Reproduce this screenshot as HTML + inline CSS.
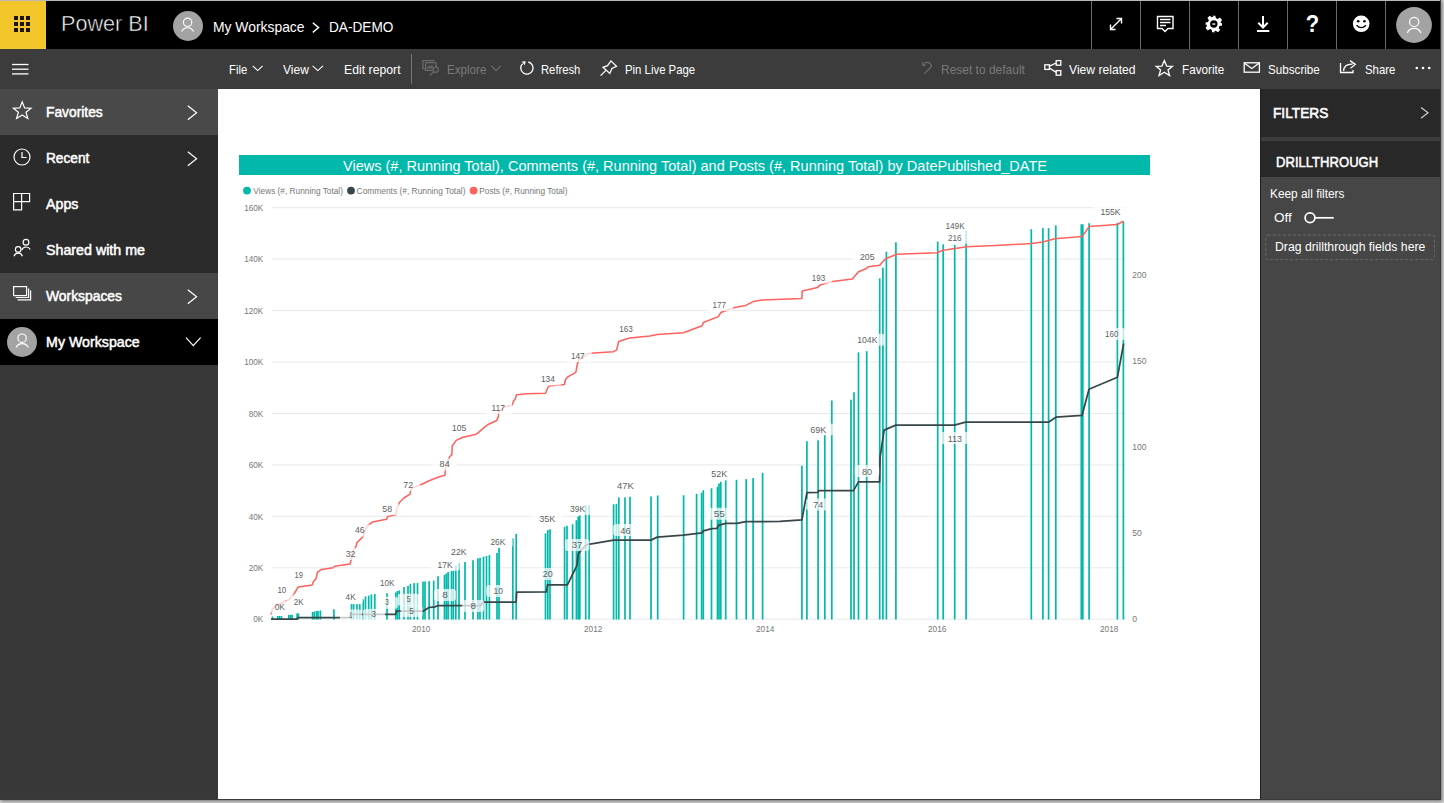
<!DOCTYPE html>
<html><head><meta charset="utf-8">
<style>
*{margin:0;padding:0;box-sizing:border-box}
html,body{width:1444px;height:803px;overflow:hidden;background:#cfcfcf;font-family:"Liberation Sans",sans-serif}
#win{position:absolute;left:0;top:0;width:1441px;height:800px;overflow:hidden;background:#383838;border-right:1px solid #3a3a3a;border-bottom:1px solid #3a3a3a;box-shadow:1px 1px 3px rgba(0,0,0,.45)}
.abs{position:absolute}
.t{position:absolute;white-space:nowrap;color:#fff}
</style></head><body><div id="win">
<div class="abs" style="left:0;top:0;width:1441px;height:49px;background:#000;border-top:1px solid #b9b9b9"></div>
<div class="abs" style="left:0;top:1px;width:46px;height:48px;background:#F3C72B"></div>
<div class="abs" style="left:0;top:49px;width:1441px;height:40px;background:#3c3c3c"></div>
<div class="abs" style="left:0;top:89px;width:218px;height:711px;background:#383838"></div>
<div class="abs" style="left:0;top:89px;width:218px;height:46px;background:#494949"></div>
<div class="abs" style="left:0;top:135px;width:218px;height:138px;background:#2b2b2b"></div>
<div class="abs" style="left:0;top:273px;width:218px;height:46px;background:#474747"></div>
<div class="abs" style="left:0;top:319px;width:218px;height:46px;background:#000"></div>
<div class="abs" style="left:218px;top:89px;width:1042px;height:711px;background:#fff;overflow:hidden"><svg width="1042" height="711" viewBox="218 89 1042 711" style="position:absolute;left:0;top:0" font-family="Liberation Sans">
<rect x="239" y="155" width="911" height="20" fill="#01B8AA"/>
<text x="343" y="170.6" font-size="14.4" fill="#fff" textLength="704" lengthAdjust="spacingAndGlyphs">Views (#, Running Total), Comments (#, Running Total) and Posts (#, Running Total) by DatePublished_DATE</text>
<circle cx="247" cy="190.6" r="3.9" fill="#01B8AA"/><circle cx="351" cy="190.6" r="3.9" fill="#374649"/><circle cx="473.6" cy="190.6" r="3.9" fill="#FD625E"/>
<text x="253.3" y="194.1" font-size="9" fill="#777" textLength="89.7" lengthAdjust="spacingAndGlyphs">Views (#, Running Total)</text>
<text x="356.6" y="194.1" font-size="9" fill="#777" textLength="108.9" lengthAdjust="spacingAndGlyphs">Comments (#, Running Total)</text>
<text x="479.3" y="194.1" font-size="9" fill="#777" textLength="88.1" lengthAdjust="spacingAndGlyphs">Posts (#, Running Total)</text>
<line x1="272" y1="207.7" x2="1125.5" y2="207.7" stroke="#e9e9e9" stroke-width="1"/>
<text x="244.2" y="210.9" font-size="9" fill="#777" textLength="19.1" lengthAdjust="spacingAndGlyphs">160K</text>
<line x1="272" y1="259.1" x2="1125.5" y2="259.1" stroke="#e9e9e9" stroke-width="1"/>
<text x="244.2" y="262.3" font-size="9" fill="#777" textLength="19.1" lengthAdjust="spacingAndGlyphs">140K</text>
<line x1="272" y1="310.6" x2="1125.5" y2="310.6" stroke="#e9e9e9" stroke-width="1"/>
<text x="244.2" y="313.8" font-size="9" fill="#777" textLength="19.1" lengthAdjust="spacingAndGlyphs">120K</text>
<line x1="272" y1="362.0" x2="1125.5" y2="362.0" stroke="#e9e9e9" stroke-width="1"/>
<text x="244.2" y="365.2" font-size="9" fill="#777" textLength="19.1" lengthAdjust="spacingAndGlyphs">100K</text>
<line x1="272" y1="413.5" x2="1125.5" y2="413.5" stroke="#e9e9e9" stroke-width="1"/>
<text x="248.7" y="416.7" font-size="9" fill="#777" textLength="14.6" lengthAdjust="spacingAndGlyphs">80K</text>
<line x1="272" y1="464.9" x2="1125.5" y2="464.9" stroke="#e9e9e9" stroke-width="1"/>
<text x="248.7" y="468.1" font-size="9" fill="#777" textLength="14.6" lengthAdjust="spacingAndGlyphs">60K</text>
<line x1="272" y1="516.3" x2="1125.5" y2="516.3" stroke="#e9e9e9" stroke-width="1"/>
<text x="248.7" y="519.5" font-size="9" fill="#777" textLength="14.6" lengthAdjust="spacingAndGlyphs">40K</text>
<line x1="272" y1="567.8" x2="1125.5" y2="567.8" stroke="#e9e9e9" stroke-width="1"/>
<text x="248.7" y="571.0" font-size="9" fill="#777" textLength="14.6" lengthAdjust="spacingAndGlyphs">20K</text>
<line x1="272" y1="619.2" x2="1125.5" y2="619.2" stroke="#e9e9e9" stroke-width="1"/>
<text x="253.2" y="622.4" font-size="9" fill="#777" textLength="10.1" lengthAdjust="spacingAndGlyphs">0K</text>
<text x="1132.3" y="622.3" font-size="9" fill="#777" textLength="4.8" lengthAdjust="spacingAndGlyphs">0</text>
<text x="1132.3" y="536.3" font-size="9" fill="#777" textLength="9.5" lengthAdjust="spacingAndGlyphs">50</text>
<text x="1132.3" y="450.4" font-size="9" fill="#777" textLength="14.2" lengthAdjust="spacingAndGlyphs">100</text>
<text x="1132.3" y="364.4" font-size="9" fill="#777" textLength="14.2" lengthAdjust="spacingAndGlyphs">150</text>
<text x="1132.3" y="278.4" font-size="9" fill="#777" textLength="14.2" lengthAdjust="spacingAndGlyphs">200</text>
<text x="412.0" y="631.7" font-size="9" fill="#777" textLength="18.4" lengthAdjust="spacingAndGlyphs">2010</text>
<text x="584.0" y="631.7" font-size="9" fill="#777" textLength="18.4" lengthAdjust="spacingAndGlyphs">2012</text>
<text x="756.0" y="631.7" font-size="9" fill="#777" textLength="18.4" lengthAdjust="spacingAndGlyphs">2014</text>
<text x="928.0" y="631.7" font-size="9" fill="#777" textLength="18.4" lengthAdjust="spacingAndGlyphs">2016</text>
<text x="1100.0" y="631.7" font-size="9" fill="#777" textLength="18.4" lengthAdjust="spacingAndGlyphs">2018</text>
<rect x="271.65" y="616.5" width="1.7" height="3.0" fill="#01B8AA"/>
<rect x="276.85" y="616.0" width="1.7" height="3.5" fill="#01B8AA"/>
<rect x="278.55" y="616.0" width="1.7" height="3.5" fill="#01B8AA"/>
<rect x="280.55" y="616.0" width="1.7" height="3.5" fill="#01B8AA"/>
<rect x="287.95" y="614.8" width="1.7" height="4.7" fill="#01B8AA"/>
<rect x="289.65" y="614.8" width="1.7" height="4.7" fill="#01B8AA"/>
<rect x="291.25" y="614.8" width="1.7" height="4.7" fill="#01B8AA"/>
<rect x="296.25" y="613.4" width="1.7" height="6.1" fill="#01B8AA"/>
<rect x="297.55" y="613.4" width="1.7" height="6.1" fill="#01B8AA"/>
<rect x="311.75" y="612.0" width="1.7" height="7.5" fill="#01B8AA"/>
<rect x="313.45" y="611.5" width="1.7" height="8.0" fill="#01B8AA"/>
<rect x="315.65" y="611.0" width="1.7" height="8.5" fill="#01B8AA"/>
<rect x="317.15" y="611.0" width="1.7" height="8.5" fill="#01B8AA"/>
<rect x="319.55" y="610.5" width="1.7" height="9.0" fill="#01B8AA"/>
<rect x="333.05" y="609.3" width="1.7" height="10.2" fill="#01B8AA"/>
<rect x="350.65" y="604.1" width="1.7" height="15.4" fill="#01B8AA"/>
<rect x="352.75" y="604.1" width="1.7" height="15.4" fill="#01B8AA"/>
<rect x="356.15" y="604.1" width="1.7" height="15.4" fill="#01B8AA"/>
<rect x="358.95" y="604.1" width="1.7" height="15.4" fill="#01B8AA"/>
<rect x="362.45" y="599.3" width="1.7" height="20.2" fill="#01B8AA"/>
<rect x="364.65" y="596.4" width="1.7" height="23.1" fill="#01B8AA"/>
<rect x="367.85" y="595.6" width="1.7" height="23.9" fill="#01B8AA"/>
<rect x="370.55" y="594.4" width="1.7" height="25.1" fill="#01B8AA"/>
<rect x="373.95" y="594.0" width="1.7" height="25.5" fill="#01B8AA"/>
<rect x="386.15" y="593.2" width="1.7" height="26.3" fill="#01B8AA"/>
<rect x="394.95" y="592.4" width="1.7" height="27.1" fill="#01B8AA"/>
<rect x="396.65" y="591.0" width="1.7" height="28.5" fill="#01B8AA"/>
<rect x="398.45" y="590.4" width="1.7" height="29.1" fill="#01B8AA"/>
<rect x="403.15" y="587.1" width="1.7" height="32.4" fill="#01B8AA"/>
<rect x="407.15" y="585.9" width="1.7" height="33.6" fill="#01B8AA"/>
<rect x="409.55" y="583.9" width="1.7" height="35.6" fill="#01B8AA"/>
<rect x="413.25" y="583.1" width="1.7" height="36.4" fill="#01B8AA"/>
<rect x="416.65" y="583.1" width="1.7" height="36.4" fill="#01B8AA"/>
<rect x="422.15" y="581.5" width="1.7" height="38.0" fill="#01B8AA"/>
<rect x="424.15" y="581.5" width="1.7" height="38.0" fill="#01B8AA"/>
<rect x="428.25" y="581.1" width="1.7" height="38.4" fill="#01B8AA"/>
<rect x="432.85" y="580.6" width="1.7" height="38.9" fill="#01B8AA"/>
<rect x="437.15" y="576.2" width="1.7" height="43.3" fill="#01B8AA"/>
<rect x="443.65" y="575.0" width="1.7" height="44.5" fill="#01B8AA"/>
<rect x="445.45" y="573.5" width="1.7" height="46.0" fill="#01B8AA"/>
<rect x="447.25" y="572.0" width="1.7" height="47.5" fill="#01B8AA"/>
<rect x="450.65" y="570.8" width="1.7" height="48.7" fill="#01B8AA"/>
<rect x="452.45" y="570.8" width="1.7" height="48.7" fill="#01B8AA"/>
<rect x="454.95" y="565.5" width="1.7" height="54.0" fill="#01B8AA"/>
<rect x="458.15" y="563.1" width="1.7" height="56.4" fill="#01B8AA"/>
<rect x="464.15" y="562.0" width="1.7" height="57.5" fill="#01B8AA"/>
<rect x="472.15" y="560.2" width="1.7" height="59.3" fill="#01B8AA"/>
<rect x="477.05" y="558.4" width="1.7" height="61.1" fill="#01B8AA"/>
<rect x="479.15" y="557.8" width="1.7" height="61.7" fill="#01B8AA"/>
<rect x="482.65" y="556.6" width="1.7" height="62.9" fill="#01B8AA"/>
<rect x="485.65" y="556.0" width="1.7" height="63.5" fill="#01B8AA"/>
<rect x="488.55" y="555.1" width="1.7" height="64.4" fill="#01B8AA"/>
<rect x="496.15" y="553.0" width="1.7" height="66.5" fill="#01B8AA"/>
<rect x="498.15" y="547.8" width="1.7" height="71.7" fill="#01B8AA"/>
<rect x="511.95" y="538.3" width="1.7" height="81.2" fill="#01B8AA"/>
<rect x="515.35" y="533.8" width="1.7" height="85.7" fill="#01B8AA"/>
<rect x="544.65" y="533.3" width="1.7" height="86.2" fill="#01B8AA"/>
<rect x="546.95" y="530.1" width="1.7" height="89.4" fill="#01B8AA"/>
<rect x="549.15" y="529.2" width="1.7" height="90.3" fill="#01B8AA"/>
<rect x="563.75" y="526.7" width="1.7" height="92.8" fill="#01B8AA"/>
<rect x="566.15" y="525.8" width="1.7" height="93.7" fill="#01B8AA"/>
<rect x="571.75" y="524.3" width="1.7" height="95.2" fill="#01B8AA"/>
<rect x="575.55" y="520.2" width="1.7" height="99.3" fill="#01B8AA"/>
<rect x="577.35" y="516.4" width="1.7" height="103.1" fill="#01B8AA"/>
<rect x="578.95" y="515.5" width="1.7" height="104.0" fill="#01B8AA"/>
<rect x="584.85" y="505.2" width="1.7" height="114.3" fill="#01B8AA"/>
<rect x="588.25" y="505.2" width="1.7" height="114.3" fill="#01B8AA"/>
<rect x="612.75" y="504.3" width="1.7" height="115.2" fill="#01B8AA"/>
<rect x="615.55" y="503.9" width="1.7" height="115.6" fill="#01B8AA"/>
<rect x="617.95" y="497.4" width="1.7" height="122.1" fill="#01B8AA"/>
<rect x="624.15" y="497.4" width="1.7" height="122.1" fill="#01B8AA"/>
<rect x="629.15" y="496.8" width="1.7" height="122.7" fill="#01B8AA"/>
<rect x="650.15" y="496.5" width="1.7" height="123.0" fill="#01B8AA"/>
<rect x="656.85" y="495.5" width="1.7" height="124.0" fill="#01B8AA"/>
<rect x="682.75" y="495.3" width="1.7" height="124.2" fill="#01B8AA"/>
<rect x="695.75" y="493.8" width="1.7" height="125.7" fill="#01B8AA"/>
<rect x="700.75" y="492.8" width="1.7" height="126.7" fill="#01B8AA"/>
<rect x="702.45" y="490.3" width="1.7" height="129.2" fill="#01B8AA"/>
<rect x="710.65" y="488.3" width="1.7" height="131.2" fill="#01B8AA"/>
<rect x="716.65" y="486.8" width="1.7" height="132.7" fill="#01B8AA"/>
<rect x="718.15" y="483.5" width="1.7" height="136.0" fill="#01B8AA"/>
<rect x="719.95" y="481.8" width="1.7" height="137.7" fill="#01B8AA"/>
<rect x="724.85" y="480.3" width="1.7" height="139.2" fill="#01B8AA"/>
<rect x="735.65" y="479.8" width="1.7" height="139.7" fill="#01B8AA"/>
<rect x="745.35" y="479.1" width="1.7" height="140.4" fill="#01B8AA"/>
<rect x="752.25" y="478.1" width="1.7" height="141.4" fill="#01B8AA"/>
<rect x="761.75" y="472.8" width="1.7" height="146.7" fill="#01B8AA"/>
<rect x="801.05" y="465.7" width="1.7" height="153.8" fill="#01B8AA"/>
<rect x="806.05" y="441.3" width="1.7" height="178.2" fill="#01B8AA"/>
<rect x="817.25" y="440.3" width="1.7" height="179.2" fill="#01B8AA"/>
<rect x="823.95" y="434.6" width="1.7" height="184.9" fill="#01B8AA"/>
<rect x="830.95" y="400.5" width="1.7" height="219.0" fill="#01B8AA"/>
<rect x="850.15" y="399.7" width="1.7" height="219.8" fill="#01B8AA"/>
<rect x="853.15" y="392.3" width="1.7" height="227.2" fill="#01B8AA"/>
<rect x="857.65" y="352.4" width="1.7" height="267.1" fill="#01B8AA"/>
<rect x="865.85" y="351.2" width="1.7" height="268.3" fill="#01B8AA"/>
<rect x="878.85" y="278.4" width="1.7" height="341.1" fill="#01B8AA"/>
<rect x="882.05" y="267.7" width="1.7" height="351.8" fill="#01B8AA"/>
<rect x="885.55" y="251.7" width="1.7" height="367.8" fill="#01B8AA"/>
<rect x="895.05" y="242.3" width="1.7" height="377.2" fill="#01B8AA"/>
<rect x="936.85" y="241.5" width="1.7" height="378.0" fill="#01B8AA"/>
<rect x="942.35" y="244.3" width="1.7" height="375.2" fill="#01B8AA"/>
<rect x="953.85" y="245.0" width="1.7" height="374.5" fill="#01B8AA"/>
<rect x="965.25" y="231.0" width="1.7" height="388.5" fill="#01B8AA"/>
<rect x="1030.45" y="229.2" width="1.7" height="390.3" fill="#01B8AA"/>
<rect x="1042.05" y="228.1" width="1.7" height="391.4" fill="#01B8AA"/>
<rect x="1047.75" y="228.1" width="1.7" height="391.4" fill="#01B8AA"/>
<rect x="1054.95" y="225.4" width="1.7" height="394.1" fill="#01B8AA"/>
<rect x="1080.45" y="224.3" width="1.7" height="395.2" fill="#01B8AA"/>
<rect x="1081.95" y="224.3" width="1.7" height="395.2" fill="#01B8AA"/>
<rect x="1088.25" y="223.2" width="1.7" height="396.3" fill="#01B8AA"/>
<rect x="1116.55" y="222.8" width="1.7" height="396.7" fill="#01B8AA"/>
<rect x="1122.55" y="221.3" width="1.7" height="398.2" fill="#01B8AA"/>
<polyline points="271.1,614.4 272.1,609.8 275.3,606.0 289.3,599.5 294.9,592.5 298.2,586.9 312.2,585.0 313.6,581.3 316.0,578.9 317.4,572.4 321.1,569.6 333.2,567.7 334.6,566.3 350.0,564.0 351.2,559.7 353.4,550.7 356.2,546.2 356.8,542.9 362.9,536.7 365.2,530.5 366.9,526.1 372.5,522.1 386.5,519.3 387.6,516.5 396.0,514.8 396.6,509.2 399.4,502.5 403.9,498.0 410.0,494.1 410.6,490.7 412.3,487.9 422.4,484.0 429.1,480.7 440.0,476.5 445.0,475.3 445.6,467.2 449.3,457.2 451.8,454.7 452.2,446.0 456.2,440.4 462.4,437.5 476.1,434.2 478.6,432.3 484.2,427.3 488.6,424.2 496.7,420.5 498.5,416.1 498.5,411.8 503.5,407.6 512.2,404.9 513.5,401.2 515.3,398.7 516.6,394.7 527.2,393.7 545.5,393.2 548.0,387.2 550.4,385.7 564.4,384.5 565.4,379.8 567.9,376.8 575.8,372.3 577.3,364.3 578.8,359.8 584.8,355.9 588.8,353.4 593.8,353.1 613.7,351.7 616.7,349.9 618.7,341.4 621.7,340.4 629.6,337.9 649.9,336.0 657.3,334.5 683.5,332.8 702.2,325.8 703.4,322.5 718.3,316.6 720.8,312.6 734.5,307.6 745.7,305.4 753.2,301.6 761.9,300.1 801.8,298.6 802.3,290.9 817.4,287.6 819.9,285.1 832.4,281.6 852.3,279.1 858.5,271.7 866.0,268.7 868.5,266.7 879.7,265.2 885.9,258.5 897.1,254.2 937.0,252.7 943.2,250.2 966.9,246.7 1000.0,245.3 1031.3,243.6 1042.9,241.9 1054.6,238.7 1082.1,236.6 1089.1,226.6 1117.0,224.5 1123.4,221.3" fill="none" stroke="#FD625E" stroke-width="1.55" stroke-linejoin="round"/>
<polyline points="271.0,619.0 297.1,619.0 298.2,617.6 350.3,617.6 350.5,614.4 395.7,614.4 396.5,611.0 423.4,611.0 429.0,607.4 434.0,607.2 438.0,605.6 480.6,605.6 483.5,602.0 516.1,602.0 516.7,592.1 546.5,591.9 547.5,584.9 567.4,584.9 576.9,565.6 578.3,553.7 586.3,544.7 590.0,544.1 613.7,540.1 651.0,540.1 657.2,537.1 683.4,535.1 702.1,532.9 703.3,530.9 712.0,528.6 717.0,528.4 718.3,525.4 725.7,523.4 737.0,523.4 745.7,521.7 764.3,521.7 780.0,521.3 801.9,519.8 806.9,492.6 818.1,492.4 818.8,490.6 853.5,490.6 858.5,481.9 879.6,481.9 880.1,457.0 884.1,430.1 895.8,425.1 954.3,425.1 965.6,422.2 1048.4,422.2 1055.9,417.2 1082.0,415.4 1089.0,389.3 1117.4,377.3 1123.6,343.7" fill="none" stroke="#374649" stroke-width="1.75" stroke-linejoin="round"/>
<rect x="267.5" y="600.8" width="24.7" height="12" rx="3" fill="#fff" fill-opacity="0.72"/>
<rect x="270.2" y="584.8" width="23.3" height="12" rx="3" fill="#fff" fill-opacity="0.72"/>
<rect x="287.4" y="569.8" width="22.8" height="12" rx="3" fill="#fff" fill-opacity="0.72"/>
<rect x="286.5" y="596.1" width="24.2" height="12" rx="3" fill="#fff" fill-opacity="0.72"/>
<rect x="338.4" y="591.6" width="24.4" height="12" rx="3" fill="#fff" fill-opacity="0.72"/>
<rect x="372.7" y="577.0" width="28.9" height="12" rx="3" fill="#fff" fill-opacity="0.72"/>
<rect x="339.9" y="609.6" width="22.0" height="12" rx="3" fill="#fff" fill-opacity="0.72"/>
<rect x="362.9" y="608.9" width="22.0" height="12" rx="3" fill="#fff" fill-opacity="0.72"/>
<rect x="375.9" y="596.8" width="22.0" height="12" rx="3" fill="#fff" fill-opacity="0.72"/>
<rect x="397.5" y="593.7" width="22.0" height="12" rx="3" fill="#fff" fill-opacity="0.72"/>
<rect x="400.6" y="605.1" width="22.0" height="12" rx="3" fill="#fff" fill-opacity="0.72"/>
<rect x="430.4" y="558.7" width="29.3" height="12" rx="3" fill="#fff" fill-opacity="0.72"/>
<rect x="443.9" y="546.2" width="30.0" height="12" rx="3" fill="#fff" fill-opacity="0.72"/>
<rect x="483.2" y="535.8" width="29.5" height="12" rx="3" fill="#fff" fill-opacity="0.72"/>
<rect x="532.0" y="512.8" width="30.5" height="12" rx="3" fill="#fff" fill-opacity="0.72"/>
<rect x="562.9" y="502.9" width="29.5" height="12" rx="3" fill="#fff" fill-opacity="0.72"/>
<rect x="434.0" y="589.0" width="22.0" height="12" rx="3" fill="#fff" fill-opacity="0.72"/>
<rect x="462.2" y="600.0" width="22.0" height="12" rx="3" fill="#fff" fill-opacity="0.72"/>
<rect x="486.2" y="585.0" width="23.9" height="12" rx="3" fill="#fff" fill-opacity="0.72"/>
<rect x="535.6" y="568.1" width="24.3" height="12" rx="3" fill="#fff" fill-opacity="0.72"/>
<rect x="564.9" y="539.0" width="24.5" height="12" rx="3" fill="#fff" fill-opacity="0.72"/>
<rect x="609.9" y="479.8" width="31.2" height="12" rx="3" fill="#fff" fill-opacity="0.72"/>
<rect x="613.1" y="524.0" width="24.7" height="12" rx="3" fill="#fff" fill-opacity="0.72"/>
<rect x="704.0" y="467.9" width="30.5" height="12" rx="3" fill="#fff" fill-opacity="0.72"/>
<rect x="706.5" y="507.7" width="25.5" height="12" rx="3" fill="#fff" fill-opacity="0.72"/>
<rect x="850.0" y="333.7" width="34.7" height="12" rx="3" fill="#fff" fill-opacity="0.72"/>
<rect x="803.1" y="423.6" width="30.5" height="12" rx="3" fill="#fff" fill-opacity="0.72"/>
<rect x="854.7" y="465.0" width="24.5" height="12" rx="3" fill="#fff" fill-opacity="0.72"/>
<rect x="806.1" y="498.4" width="24.2" height="12" rx="3" fill="#fff" fill-opacity="0.72"/>
<rect x="940.6" y="432.1" width="28.7" height="12" rx="3" fill="#fff" fill-opacity="0.72"/>
<rect x="804.5" y="271.5" width="27.9" height="12" rx="3" fill="#fff" fill-opacity="0.72"/>
<rect x="852.8" y="250.9" width="28.9" height="12" rx="3" fill="#fff" fill-opacity="0.72"/>
<rect x="938.2" y="220.1" width="33.7" height="12" rx="3" fill="#fff" fill-opacity="0.72"/>
<rect x="940.7" y="231.7" width="28.2" height="12" rx="3" fill="#fff" fill-opacity="0.72"/>
<rect x="1093.2" y="205.8" width="34.5" height="12" rx="3" fill="#fff" fill-opacity="0.72"/>
<rect x="1097.9" y="328.0" width="27.7" height="12" rx="3" fill="#fff" fill-opacity="0.72"/>
<rect x="432.4" y="458.4" width="24.5" height="12" rx="3" fill="#fff" fill-opacity="0.72"/>
<rect x="444.9" y="421.9" width="28.7" height="12" rx="3" fill="#fff" fill-opacity="0.72"/>
<rect x="484.2" y="402.0" width="28.0" height="12" rx="3" fill="#fff" fill-opacity="0.72"/>
<rect x="533.8" y="373.4" width="28.2" height="12" rx="3" fill="#fff" fill-opacity="0.72"/>
<rect x="563.7" y="350.1" width="28.2" height="12" rx="3" fill="#fff" fill-opacity="0.72"/>
<rect x="612.0" y="322.9" width="27.9" height="12" rx="3" fill="#fff" fill-opacity="0.72"/>
<rect x="705.4" y="298.9" width="27.9" height="12" rx="3" fill="#fff" fill-opacity="0.72"/>
<rect x="338.5" y="548.0" width="24.2" height="12" rx="3" fill="#fff" fill-opacity="0.72"/>
<rect x="347.7" y="524.5" width="24.1" height="12" rx="3" fill="#fff" fill-opacity="0.72"/>
<rect x="375.1" y="503.3" width="24.2" height="12" rx="3" fill="#fff" fill-opacity="0.72"/>
<rect x="396.1" y="478.9" width="24.1" height="12" rx="3" fill="#fff" fill-opacity="0.72"/>
<text x="274.7" y="609.5" font-size="9.5" fill="#605f5f" textLength="10.3" lengthAdjust="spacingAndGlyphs">0K</text>
<text x="277.4" y="593.4" font-size="9.5" fill="#605f5f" textLength="8.9" lengthAdjust="spacingAndGlyphs">10</text>
<text x="294.6" y="578.4" font-size="9.5" fill="#605f5f" textLength="8.4" lengthAdjust="spacingAndGlyphs">19</text>
<text x="293.7" y="604.5" font-size="9.5" fill="#605f5f" textLength="9.8" lengthAdjust="spacingAndGlyphs">2K</text>
<text x="345.6" y="600.0" font-size="9.5" fill="#605f5f" textLength="10.0" lengthAdjust="spacingAndGlyphs">4K</text>
<text x="379.9" y="585.6" font-size="9.5" fill="#605f5f" textLength="14.5" lengthAdjust="spacingAndGlyphs">10K</text>
<text x="349.5" y="617.8" font-size="9.5" fill="#605f5f" textLength="2.8" lengthAdjust="spacingAndGlyphs">1</text>
<text x="371.6" y="617.4" font-size="9.5" fill="#605f5f" textLength="4.5" lengthAdjust="spacingAndGlyphs">3</text>
<text x="384.9" y="605.3" font-size="9.5" fill="#605f5f" textLength="3.9" lengthAdjust="spacingAndGlyphs">3</text>
<text x="406.5" y="602.3" font-size="9.5" fill="#605f5f" textLength="4.0" lengthAdjust="spacingAndGlyphs">5</text>
<text x="409.3" y="613.6" font-size="9.5" fill="#605f5f" textLength="4.5" lengthAdjust="spacingAndGlyphs">5</text>
<text x="437.6" y="567.8" font-size="9.5" fill="#605f5f" textLength="14.9" lengthAdjust="spacingAndGlyphs">17K</text>
<text x="451.1" y="555.3" font-size="9.5" fill="#605f5f" textLength="15.6" lengthAdjust="spacingAndGlyphs">22K</text>
<text x="490.4" y="544.9" font-size="9.5" fill="#605f5f" textLength="15.1" lengthAdjust="spacingAndGlyphs">26K</text>
<text x="539.2" y="521.8" font-size="9.5" fill="#605f5f" textLength="16.1" lengthAdjust="spacingAndGlyphs">35K</text>
<text x="570.1" y="512.0" font-size="9.5" fill="#605f5f" textLength="15.1" lengthAdjust="spacingAndGlyphs">39K</text>
<text x="442.2" y="598.1" font-size="9.5" fill="#605f5f" textLength="5.6" lengthAdjust="spacingAndGlyphs">8</text>
<text x="470.5" y="609.0" font-size="9.5" fill="#605f5f" textLength="5.5" lengthAdjust="spacingAndGlyphs">8</text>
<text x="493.4" y="594.1" font-size="9.5" fill="#605f5f" textLength="9.5" lengthAdjust="spacingAndGlyphs">10</text>
<text x="542.8" y="577.2" font-size="9.5" fill="#605f5f" textLength="9.9" lengthAdjust="spacingAndGlyphs">20</text>
<text x="572.1" y="547.9" font-size="9.5" fill="#605f5f" textLength="10.1" lengthAdjust="spacingAndGlyphs">37</text>
<text x="617.1" y="489.4" font-size="9.5" fill="#605f5f" textLength="16.8" lengthAdjust="spacingAndGlyphs">47K</text>
<text x="620.3" y="533.7" font-size="9.5" fill="#605f5f" textLength="10.3" lengthAdjust="spacingAndGlyphs">46</text>
<text x="711.2" y="477.4" font-size="9.5" fill="#605f5f" textLength="16.1" lengthAdjust="spacingAndGlyphs">52K</text>
<text x="713.7" y="517.3" font-size="9.5" fill="#605f5f" textLength="11.1" lengthAdjust="spacingAndGlyphs">55</text>
<text x="857.2" y="343.0" font-size="9.5" fill="#605f5f" textLength="20.3" lengthAdjust="spacingAndGlyphs">104K</text>
<text x="810.3" y="433.0" font-size="9.5" fill="#605f5f" textLength="16.1" lengthAdjust="spacingAndGlyphs">69K</text>
<text x="861.9" y="474.6" font-size="9.5" fill="#605f5f" textLength="10.1" lengthAdjust="spacingAndGlyphs">80</text>
<text x="813.3" y="507.7" font-size="9.5" fill="#605f5f" textLength="9.8" lengthAdjust="spacingAndGlyphs">74</text>
<text x="947.8" y="441.7" font-size="9.5" fill="#605f5f" textLength="14.3" lengthAdjust="spacingAndGlyphs">113</text>
<text x="811.7" y="280.5" font-size="9.5" fill="#605f5f" textLength="13.5" lengthAdjust="spacingAndGlyphs">193</text>
<text x="860.0" y="259.8" font-size="9.5" fill="#605f5f" textLength="14.5" lengthAdjust="spacingAndGlyphs">205</text>
<text x="945.4" y="228.9" font-size="9.5" fill="#605f5f" textLength="19.3" lengthAdjust="spacingAndGlyphs">149K</text>
<text x="947.9" y="240.6" font-size="9.5" fill="#605f5f" textLength="13.8" lengthAdjust="spacingAndGlyphs">216</text>
<text x="1100.4" y="214.6" font-size="9.5" fill="#605f5f" textLength="20.1" lengthAdjust="spacingAndGlyphs">155K</text>
<text x="1105.1" y="336.7" font-size="9.5" fill="#605f5f" textLength="13.3" lengthAdjust="spacingAndGlyphs">160</text>
<text x="439.6" y="467.0" font-size="9.5" fill="#605f5f" textLength="10.1" lengthAdjust="spacingAndGlyphs">84</text>
<text x="452.1" y="430.9" font-size="9.5" fill="#605f5f" textLength="14.3" lengthAdjust="spacingAndGlyphs">105</text>
<text x="491.4" y="410.9" font-size="9.5" fill="#605f5f" textLength="13.6" lengthAdjust="spacingAndGlyphs">117</text>
<text x="541.0" y="382.3" font-size="9.5" fill="#605f5f" textLength="13.8" lengthAdjust="spacingAndGlyphs">134</text>
<text x="570.9" y="358.9" font-size="9.5" fill="#605f5f" textLength="13.8" lengthAdjust="spacingAndGlyphs">147</text>
<text x="619.2" y="331.6" font-size="9.5" fill="#605f5f" textLength="13.5" lengthAdjust="spacingAndGlyphs">163</text>
<text x="712.6" y="307.9" font-size="9.5" fill="#605f5f" textLength="13.5" lengthAdjust="spacingAndGlyphs">177</text>
<text x="345.7" y="556.9" font-size="9.5" fill="#605f5f" textLength="9.8" lengthAdjust="spacingAndGlyphs">32</text>
<text x="354.9" y="533.3" font-size="9.5" fill="#605f5f" textLength="9.7" lengthAdjust="spacingAndGlyphs">46</text>
<text x="382.3" y="512.4" font-size="9.5" fill="#605f5f" textLength="9.8" lengthAdjust="spacingAndGlyphs">58</text>
<text x="403.3" y="488.1" font-size="9.5" fill="#605f5f" textLength="9.7" lengthAdjust="spacingAndGlyphs">72</text>
</svg></div>
<div class="abs" style="left:1260px;top:89px;width:181px;height:711px;background:#464646;border-left:1px solid #1e1e1e"></div>
<div class="abs" style="left:1261px;top:89px;width:180px;height:48px;background:#282828"></div>
<div class="abs" style="left:1261px;top:137px;width:180px;height:4px;background:#3c3c3c"></div>
<div class="abs" style="left:1261px;top:141px;width:180px;height:36px;background:#282828"></div>

<svg class="abs" style="left:0;top:0" width="1441" height="89" viewBox="0 0 1441 89">
 <g fill="#1c1410">
  <rect x="14" y="16" width="4" height="4"/><rect x="20" y="16" width="4" height="4"/><rect x="26" y="16" width="4" height="4"/>
  <rect x="14" y="22" width="4" height="4"/><rect x="20" y="22" width="4" height="4"/><rect x="26" y="22" width="4" height="4"/>
  <rect x="14" y="28" width="4" height="4"/><rect x="20" y="28" width="4" height="4"/><rect x="26" y="28" width="4" height="4"/>
 </g>
 <circle cx="188" cy="26" r="15" fill="#a3a3a3"/>
 <g fill="none" stroke="#fff" stroke-width="1.15">
  <circle cx="187.6" cy="22.3" r="4.2"/>
  <path d="M181.6 31.6 A6.6 6.6 0 0 1 193.6 31.6"/>
 </g>
 <path d="M312.8 22.8 L318.6 27.6 L312.8 32.4" fill="none" stroke="#fff" stroke-width="1.4"/>
 <g stroke="#6a6a6a" stroke-width="1">
  <line x1="1091.5" y1="1" x2="1091.5" y2="49"/><line x1="1140.5" y1="1" x2="1140.5" y2="49"/><line x1="1189.5" y1="1" x2="1189.5" y2="49"/>
  <line x1="1238.5" y1="1" x2="1238.5" y2="49"/><line x1="1287.5" y1="1" x2="1287.5" y2="49"/><line x1="1336.5" y1="1" x2="1336.5" y2="49"/>
  <line x1="1385.5" y1="1" x2="1385.5" y2="49"/>
 </g>
 <g fill="none" stroke="#fff" stroke-width="1.4">
  <path d="M1110.5 29.5 L1121.5 18.5 M1116.5 18.5 L1121.5 18.5 L1121.5 23.5 M1110.5 24.5 L1110.5 29.5 L1115.5 29.5"/>
  <path d="M1157.5 16.5 H1173 V28.5 H1168 L1165 31.5 L1162 28.5 H1157.5 Z"/>
  <path d="M1160 19.5 H1170.5 M1160 22.5 H1170.5 M1160 25.5 H1166"/>
  <path d="M1263 16 V27 M1258.3 22.8 L1263 27.5 L1267.7 22.8" stroke-width="2"/>
 </g>
 <rect x="1257" y="30" width="12.3" height="2" fill="#fff"/>
 <g transform="translate(1213.8 24)">
  <path fill="#fff" fill-rule="evenodd" d="M-1.6 -8.2 H1.6 L2.1 -5.7 L3.9 -4.9 L6 -6.4 L8.3 -4.1 L6.8 -2 L7.6 -0.2 L8.2 -1.6 V1.6 L5.7 2.1 L4.9 3.9 L6.4 6 L4.1 8.3 L2 6.8 L0.2 7.6 L1.6 8.2 H-1.6 L-2.1 5.7 L-3.9 4.9 L-6 6.4 L-8.3 4.1 L-6.8 2 L-7.6 0.2 L-8.2 1.6 V-1.6 L-5.7 -2.1 L-4.9 -3.9 L-6.4 -6 L-4.1 -8.3 L-2 -6.8 L-0.2 -7.6 Z M-3.7 0 A3.7 3.7 0 1 0 3.7 0 A3.7 3.7 0 1 0 -3.7 0 Z"/>
  <rect x="-1.5" y="-0.6" width="3" height="1.3" fill="#fff"/>
 </g>
 <text x="1312.4" y="31.7" font-family="Liberation Sans" font-weight="bold" font-size="22" fill="#fff" text-anchor="middle" transform="translate(1312.4 31.7) scale(1 1.1) translate(-1312.4 -31.7)">?</text>
 <circle cx="1361.2" cy="23.8" r="8.3" fill="#fff"/>
 <circle cx="1358.2" cy="21.3" r="1.3" fill="#000"/><circle cx="1364.4" cy="21.3" r="1.3" fill="#000"/>
 <path d="M1356.6 25.2 Q1361.3 30 1366 25.2" fill="none" stroke="#000" stroke-width="1.4"/>
 <circle cx="1414" cy="25" r="17.9" fill="#a3a3a3"/>
 <g fill="none" stroke="#fff" stroke-width="1.2">
  <circle cx="1414.2" cy="21.9" r="4.6"/>
  <path d="M1407.3 33 A7.3 7.3 0 0 1 1420.9 33"/>
 </g>
 <!-- toolbar -->
 <g stroke="#fff" stroke-width="1.3">
  <line x1="12" y1="64.5" x2="28.5" y2="64.5"/><line x1="12" y1="69.2" x2="28.5" y2="69.2"/><line x1="12" y1="73.9" x2="28.5" y2="73.9"/>
 </g>
 <g fill="none" stroke="#fff" stroke-width="1.1">
  <path d="M252.8 65.8 L257.7 70.6 L262.6 65.8"/>
  <path d="M312.6 65.8 L317.8 70.6 L323 65.8"/>
 </g>
 <line x1="411.5" y1="54" x2="411.5" y2="84" stroke="#777" stroke-width="1"/>
 <g fill="none" stroke="#6c6c6c" stroke-width="1.2">
  <path d="M434.6 60.6 H422.9 V68.6 H425.2"/>
  <path d="M425.6 62.6 H436 V67 M425.6 62.6 V70.4 H432.5"/>
  <path d="M427.5 68.6 V66.8 M429 68.6 V65.6 M430.5 68.6 V66.3 M432 68.6 V65"/>
  <circle cx="435.7" cy="69.7" r="2.6"/><path d="M433.8 71.8 L429.8 75.4"/>
  <path d="M491.4 65.8 L496.1 70.6 L500.8 65.8"/>
 </g>
 <g fill="none" stroke="#fff" stroke-width="1.3">
  <path d="M528.3 62 A6.15 6.15 0 1 1 522.6 63.6"/>
  <path d="M521.8 61.5 L525.7 61.3 L524.8 65.3 Z" fill="#fff" stroke="none"/>
  <path d="M610.9 60.9 L616.5 66.4 L611.9 68.5 L609.8 73.4 L603 67.3 L607.6 65.6 Z M605.9 70.4 L600.6 75.6"/>
 </g>
 <g fill="none" stroke="#6c6c6c" stroke-width="1.2">
  <path d="M924.6 62.8 C929.6 61.4 933 64.6 930.2 68 L924.3 73.6"/><path d="M921.9 61.7 L922.3 66.1 L926.4 65.6 Z" fill="#6c6c6c" stroke="none"/>
 </g>
 <g fill="none" stroke="#fff" stroke-width="1.3">
  <rect x="1044.8" y="64.8" width="4.6" height="4.6"/><rect x="1056.2" y="60.6" width="4.6" height="4.6"/><rect x="1056.2" y="70.6" width="4.6" height="4.6"/>
  <path d="M1049.4 66.2 L1056.2 63 M1049.4 68 L1056.2 72.4"/>
  <path d="M1164.3 60.6 L1166.7 66.1 L1172.4 66.3 L1168 70 L1169.6 75.5 L1164.3 72.3 L1159 75.5 L1160.6 70 L1156.2 66.3 L1161.9 66.1 Z"/>
  <rect x="1244.2" y="62.8" width="15.2" height="9.4"/><path d="M1244.5 63.2 L1251.8 68.5 L1259 63.2"/>
  <path d="M1340.5 63 V72.5 H1353 V70 M1343.5 71 C1344 65.5 1348 64 1352.5 64.2 M1350 60.6 L1355.3 64.4 L1350.5 68.3"/>
 </g>
 <g fill="#fff"><circle cx="1416.8" cy="68" r="1.3"/><circle cx="1423" cy="68" r="1.3"/><circle cx="1429.2" cy="68" r="1.3"/></g>
</svg>


<svg class="abs" style="left:0;top:89px" width="218" height="300" viewBox="0 89 218 300">
 <g fill="none" stroke="#fff" stroke-width="1.2">
  <path d="M22.2 101.8 L24.6 107.9 L31 108.2 L26 112.2 L27.8 118.5 L22.2 115 L16.6 118.5 L18.4 112.2 L13.4 108.2 L19.8 107.9 Z"/>
  <circle cx="22" cy="157" r="8"/><path d="M22 152 V157.5 H26.5"/>
  <path d="M13.6 193.5 H29.6 V201.6 H21.6 V209.9 H13.6 Z M21.6 193.5 V201.6 H13.6"/>
  <circle cx="26" cy="242.2" r="2.9"/><path d="M21.8 250 A4.6 4.6 0 0 1 30.2 249.5"/>
  <circle cx="18.2" cy="249.4" r="2.8"/><path d="M14 256.3 A4.4 4.4 0 0 1 22.4 256.3"/>
  <rect x="13.6" y="286.6" width="13" height="9"/><path d="M15.6 297.5 H28.6 V288.5 M17.6 299.8 H30.6 V290.6"/>
  <path d="M187.8 105.8 L196.6 112.8 L187.8 119.8"/>
  <path d="M187.8 151.8 L196.6 158.8 L187.8 165.8"/>
  <path d="M187.8 289.8 L196.6 296.8 L187.8 303.8"/>
  <path d="M186 337.6 L193.3 345.6 L200.6 337.6"/>
 </g>
 <circle cx="22" cy="342" r="15" fill="#a3a3a3"/>
 <g fill="none" stroke="#fff" stroke-width="1.15">
  <circle cx="22.1" cy="338.2" r="4.2"/><path d="M16 347.6 A6.8 6.8 0 0 1 28.4 347.6"/>
 </g>
</svg>


<svg class="abs" style="left:1260px;top:89px" width="181" height="200" viewBox="1260 89 181 200">
 <path d="M1421 107.5 L1428 112.8 L1421 118.2" fill="none" stroke="#cfcfcf" stroke-width="1.2"/>
 <circle cx="1310" cy="217.8" r="4.9" fill="none" stroke="#fff" stroke-width="1.7"/>
 <line x1="1315" y1="217.8" x2="1333.8" y2="217.8" stroke="#fff" stroke-width="1.7"/>
 <rect x="1265.8" y="235" width="168.6" height="24.6" rx="2" fill="none" stroke="#6a6a6a" stroke-width="1" stroke-dasharray="3 2"/>
</svg>

<div class="t" style="left:61.0px;top:13.3px;font-size:22.6px;line-height:22.6px;font-weight:normal;color:#fff;transform:scaleX(0.957);transform-origin:0 0;-webkit-text-stroke:0.55px #000;">Power BI</div>
<div class="t" style="left:213.0px;top:19.8px;font-size:14.8px;line-height:14.8px;font-weight:normal;color:#fff;transform:scaleX(0.938);transform-origin:0 0;">My Workspace</div>
<div class="t" style="left:329.0px;top:19.8px;font-size:14.8px;line-height:14.8px;font-weight:normal;color:#fff;transform:scaleX(0.922);transform-origin:0 0;">DA-DEMO</div>
<div class="t" style="left:229.4px;top:63.8px;font-size:12.6px;line-height:12.6px;font-weight:normal;color:#fff;transform:scaleX(0.897);transform-origin:0 0;">File</div>
<div class="t" style="left:282.6px;top:63.8px;font-size:12.6px;line-height:12.6px;font-weight:normal;color:#fff;transform:scaleX(0.955);transform-origin:0 0;">View</div>
<div class="t" style="left:344.4px;top:63.8px;font-size:12.6px;line-height:12.6px;font-weight:normal;color:#fff;transform:scaleX(0.974);transform-origin:0 0;">Edit report</div>
<div class="t" style="left:447.3px;top:63.8px;font-size:12.6px;line-height:12.6px;font-weight:normal;color:#7a7a7a;transform:scaleX(0.923);transform-origin:0 0;">Explore</div>
<div class="t" style="left:540.8px;top:63.8px;font-size:12.6px;line-height:12.6px;font-weight:normal;color:#fff;transform:scaleX(0.893);transform-origin:0 0;">Refresh</div>
<div class="t" style="left:625.0px;top:63.8px;font-size:12.6px;line-height:12.6px;font-weight:normal;color:#fff;transform:scaleX(0.903);transform-origin:0 0;">Pin Live Page</div>
<div class="t" style="left:940.7px;top:63.8px;font-size:12.6px;line-height:12.6px;font-weight:normal;color:#7a7a7a;transform:scaleX(0.951);transform-origin:0 0;">Reset to default</div>
<div class="t" style="left:1068.8px;top:63.8px;font-size:12.6px;line-height:12.6px;font-weight:normal;color:#fff;transform:scaleX(0.964);transform-origin:0 0;">View related</div>
<div class="t" style="left:1181.5px;top:63.8px;font-size:12.6px;line-height:12.6px;font-weight:normal;color:#fff;transform:scaleX(0.931);transform-origin:0 0;">Favorite</div>
<div class="t" style="left:1268.1px;top:63.8px;font-size:12.6px;line-height:12.6px;font-weight:normal;color:#fff;transform:scaleX(0.925);transform-origin:0 0;">Subscribe</div>
<div class="t" style="left:1364.6px;top:63.8px;font-size:12.6px;line-height:12.6px;font-weight:normal;color:#fff;transform:scaleX(0.902);transform-origin:0 0;">Share</div>
<div class="t" style="left:46.1px;top:105.1px;font-size:14.2px;line-height:14.2px;font-weight:normal;color:#fff;transform:scaleX(0.972);transform-origin:0 0;-webkit-text-stroke:0.5px #fff;">Favorites</div>
<div class="t" style="left:46.1px;top:151.2px;font-size:14.2px;line-height:14.2px;font-weight:normal;color:#fff;transform:scaleX(0.963);transform-origin:0 0;-webkit-text-stroke:0.5px #fff;">Recent</div>
<div class="t" style="left:46.1px;top:197.2px;font-size:14.2px;line-height:14.2px;font-weight:normal;color:#fff;transform:scaleX(1.000);transform-origin:0 0;-webkit-text-stroke:0.5px #fff;">Apps</div>
<div class="t" style="left:46.1px;top:243.2px;font-size:14.2px;line-height:14.2px;font-weight:normal;color:#fff;transform:scaleX(1.004);transform-origin:0 0;-webkit-text-stroke:0.5px #fff;">Shared with me</div>
<div class="t" style="left:46.1px;top:289.2px;font-size:14.2px;line-height:14.2px;font-weight:normal;color:#fff;transform:scaleX(0.977);transform-origin:0 0;-webkit-text-stroke:0.5px #fff;">Workspaces</div>
<div class="t" style="left:46.1px;top:335.2px;font-size:14.2px;line-height:14.2px;font-weight:normal;color:#fff;transform:scaleX(1.000);transform-origin:0 0;-webkit-text-stroke:0.5px #fff;">My Workspace</div>
<div class="t" style="left:1273.4px;top:105.8px;font-size:14.2px;line-height:14.2px;font-weight:normal;color:#fff;transform:scaleX(0.965);transform-origin:0 0;-webkit-text-stroke:0.55px #fff;">FILTERS</div>
<div class="t" style="left:1275.8px;top:155.0px;font-size:14.0px;line-height:14.0px;font-weight:normal;color:#fff;transform:scaleX(0.934);transform-origin:0 0;-webkit-text-stroke:0.5px #fff;">DRILLTHROUGH</div>
<div class="t" style="left:1270.3px;top:187.8px;font-size:12px;line-height:12px;font-weight:normal;color:#fff;transform:scaleX(0.988);transform-origin:0 0;">Keep all filters</div>
<div class="t" style="left:1274.0px;top:212.0px;font-size:12px;line-height:12px;font-weight:normal;color:#fff;transform:scaleX(1.126);transform-origin:0 0;">Off</div>
<div class="t" style="left:1274.6px;top:241.2px;font-size:12.2px;line-height:12.2px;font-weight:normal;color:#fff;transform:scaleX(1.004);transform-origin:0 0;">Drag drillthrough fields here</div>
</div></body></html>
